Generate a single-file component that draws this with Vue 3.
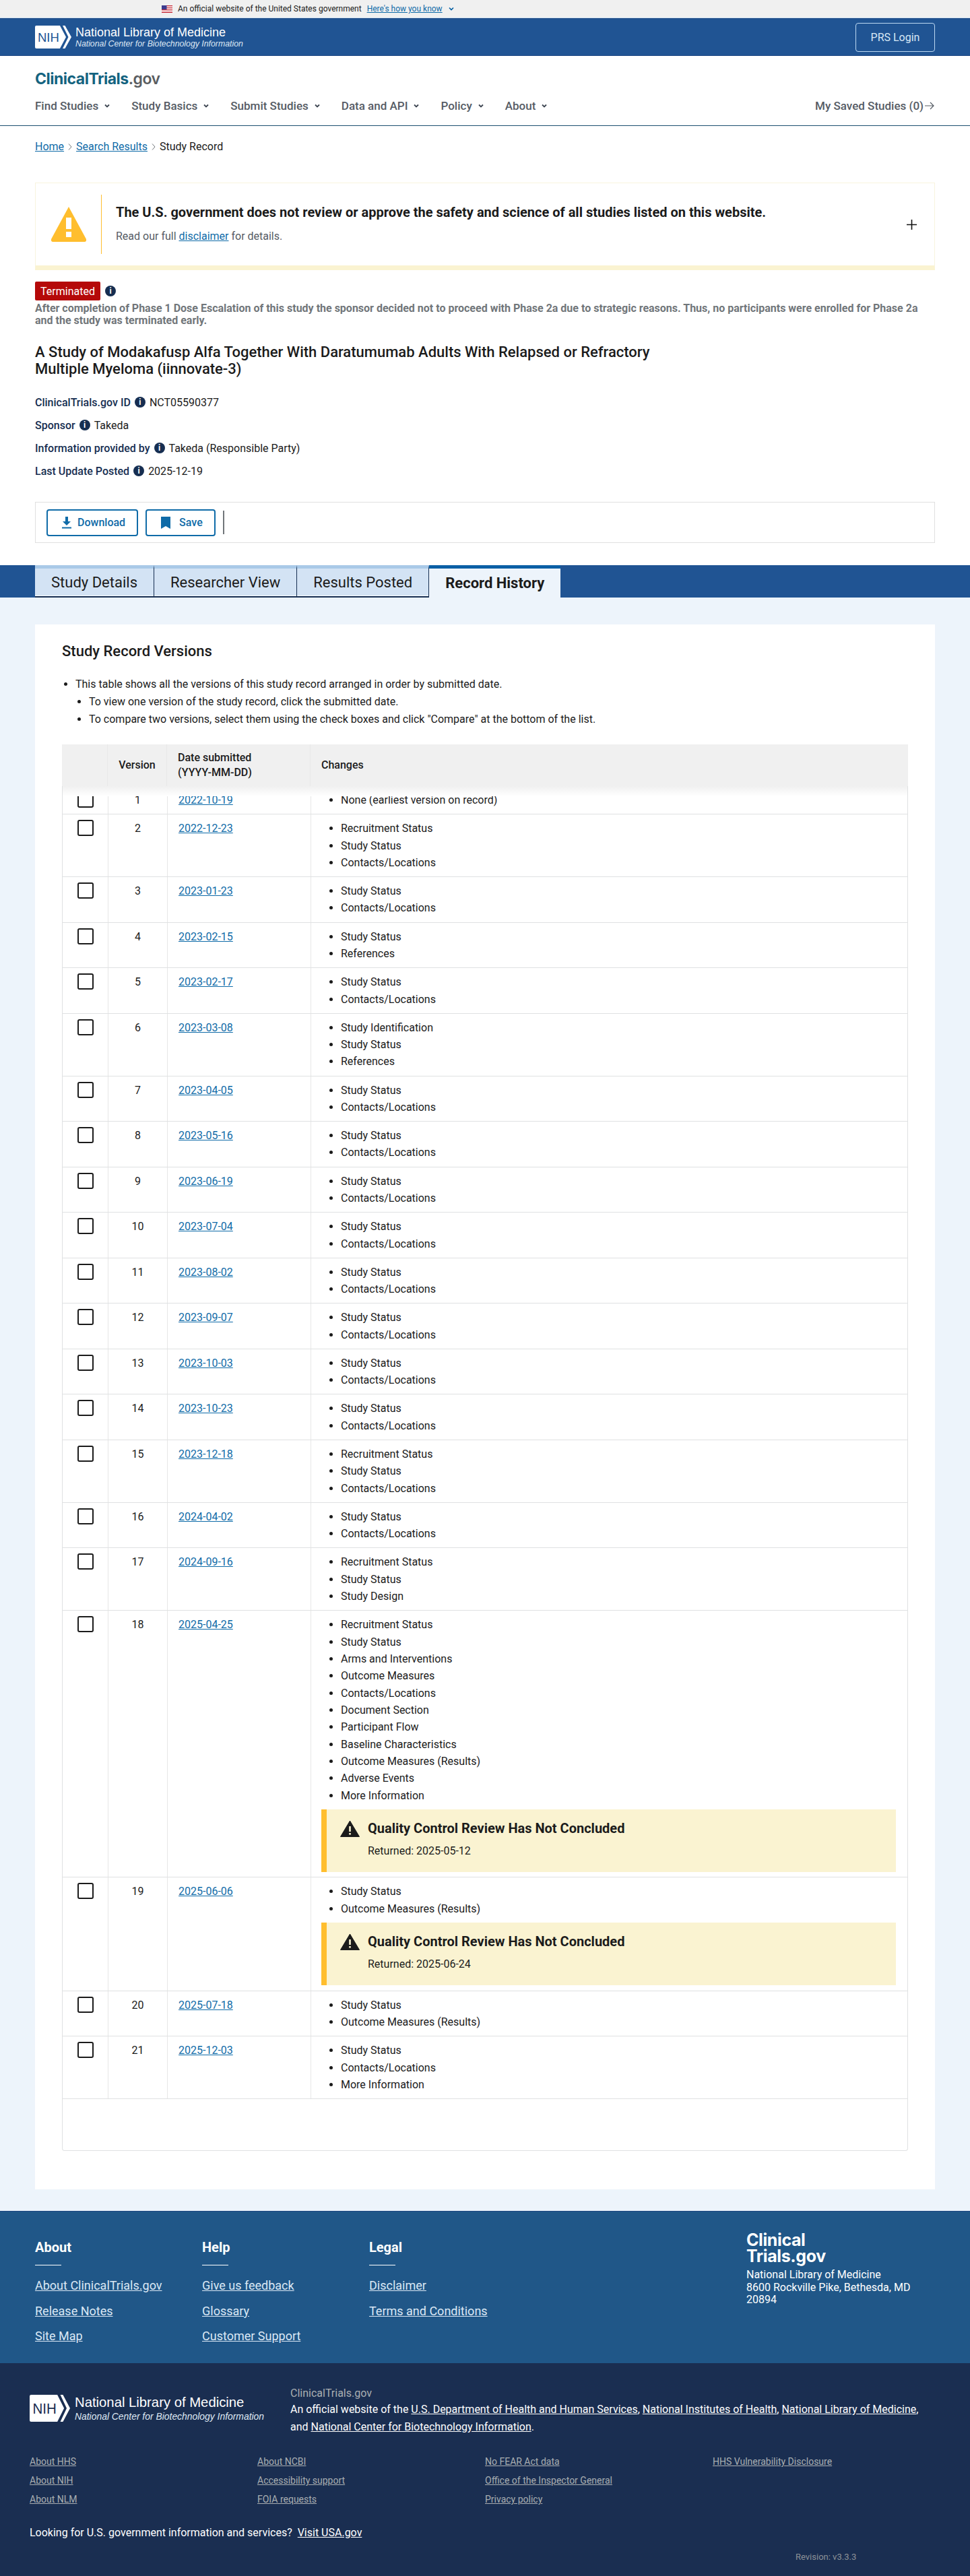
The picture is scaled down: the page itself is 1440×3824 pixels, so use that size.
<script setup>
const CL = ['Study Status', 'Contacts/Locations']

const versions = [
  { n: 1, date: '2022-10-19', changes: ['None (earliest version on record)'] },
  { n: 2, date: '2022-12-23', changes: ['Recruitment Status', ...CL] },
  { n: 3, date: '2023-01-23', changes: CL },
  { n: 4, date: '2023-02-15', changes: ['Study Status', 'References'] },
  { n: 5, date: '2023-02-17', changes: CL },
  { n: 6, date: '2023-03-08', changes: ['Study Identification', 'Study Status', 'References'] },
  { n: 7, date: '2023-04-05', changes: CL },
  { n: 8, date: '2023-05-16', changes: CL },
  { n: 9, date: '2023-06-19', changes: CL },
  { n: 10, date: '2023-07-04', changes: CL },
  { n: 11, date: '2023-08-02', changes: CL },
  { n: 12, date: '2023-09-07', changes: CL },
  { n: 13, date: '2023-10-03', changes: CL },
  { n: 14, date: '2023-10-23', changes: CL },
  { n: 15, date: '2023-12-18', changes: ['Recruitment Status', ...CL] },
  { n: 16, date: '2024-04-02', changes: CL },
  { n: 17, date: '2024-09-16', changes: ['Recruitment Status', 'Study Status', 'Study Design'] },
  {
    n: 18,
    date: '2025-04-25',
    changes: ['Recruitment Status', 'Study Status', 'Arms and Interventions', 'Outcome Measures', 'Contacts/Locations', 'Document Section', 'Participant Flow', 'Baseline Characteristics', 'Outcome Measures (Results)', 'Adverse Events', 'More Information'],
    returned: '2025-05-12'
  },
  { n: 19, date: '2025-06-06', changes: ['Study Status', 'Outcome Measures (Results)'], returned: '2025-06-24' },
  { n: 20, date: '2025-07-18', changes: ['Study Status', 'Outcome Measures (Results)'] },
  { n: 21, date: '2025-12-03', changes: [...CL, 'More Information'] }
]

const navItems = ['Find Studies', 'Study Basics', 'Submit Studies', 'Data and API', 'Policy', 'About']
const tabs = ['Study Details', 'Researcher View', 'Results Posted', 'Record History']

const meta = [
  { label: 'ClinicalTrials.gov ID', value: 'NCT05590377' },
  { label: 'Sponsor', value: 'Takeda' },
  { label: 'Information provided by', value: 'Takeda (Responsible Party)' },
  { label: 'Last Update Posted', value: '2025-12-19' }
]

const footerCols = [
  { title: 'About', links: ['About ClinicalTrials.gov', 'Release Notes', 'Site Map'] },
  { title: 'Help', links: ['Give us feedback', 'Glossary', 'Customer Support'] },
  { title: 'Legal', links: ['Disclaimer', 'Terms and Conditions'] }
]

const legalCols = [
  ['About HHS', 'About NIH', 'About NLM'],
  ['About NCBI', 'Accessibility support', 'FOIA requests'],
  ['No FEAR Act data', 'Office of the Inspector General', 'Privacy policy'],
  ['HHS Vulnerability Disclosure']
]
</script>

<template>
  <div class="page">
    <div class="gov-banner">
      <svg class="flag" width="16" height="11" viewBox="0 0 16 11">
        <rect width="16" height="11" fill="#fff" />
        <rect y="0" width="16" height="1.4" fill="#c8313e" />
        <rect y="3" width="16" height="1.4" fill="#c8313e" />
        <rect y="6" width="16" height="1.4" fill="#c8313e" />
        <rect y="9.4" width="16" height="1.6" fill="#c8313e" />
        <rect width="7.5" height="6" fill="#3c3b8f" />
      </svg>
      <span>An official website of the United States government</span>
      <a class="how">Here's how you know</a>
      <svg width="10" height="10" viewBox="0 0 10 10" fill="none" stroke="#005ea2" stroke-width="1.6"><path d="M2 3.5 5 6.5 8 3.5" /></svg>
    </div>

    <header class="nih-bar">
      <div class="nih-logo">
        <svg width="54" height="34" viewBox="0 0 54 34">
          <path d="M2 0H37L46 17 37 34H2a2 2 0 0 1-2-2V2a2 2 0 0 1 2-2Z" fill="#fff" />
          <path d="M41 0h3.500L54 17 44.500 34H41L49.500 17Z" fill="#fff" />
          <text x="4" y="24" font-family="Liberation Sans, sans-serif" font-size="18.500" fill="#205493">NIH</text>
        </svg>
        <div class="nih-text">
          <div class="nih-name">National Library of Medicine</div>
          <div class="nih-sub">National Center for Biotechnology Information</div>
        </div>
      </div>
      <a class="prs">PRS Login</a>
    </header>

    <div class="site-head">
      <div class="brand"><span class="brand-a">ClinicalTrials</span><span class="brand-b">.gov</span></div>
      <nav class="nav">
        <div class="nav-left">
          <a v-for="item in navItems" :key="item" class="nav-item">
            {{ item }}
            <svg width="10" height="10" viewBox="0 0 10 10" fill="none" stroke="#3d4551" stroke-width="1.8"><path d="M2 3.500 5 6.500 8 3.500" /></svg>
          </a>
        </div>
        <a class="saved">My Saved Studies (0)
          <svg width="16" height="14" viewBox="0 0 16 14" fill="none" stroke="#565c65" stroke-width="1.2"><path d="M1 7h13M9 2l5 5-5 5" /></svg>
        </a>
      </nav>
    </div>

    <div class="top">
      <div class="crumbs">
        <a>Home</a>
        <svg width="6" height="12" viewBox="0 0 6 12" fill="none" stroke="#71767a" stroke-width="1"><path d="M1 1.500 5 6 1 10.500" /></svg>
        <a>Search Results</a>
        <svg width="6" height="12" viewBox="0 0 6 12" fill="none" stroke="#71767a" stroke-width="1"><path d="M1 1.500 5 6 1 10.500" /></svg>
        <span>Study Record</span>
      </div>

      <section class="notice">
        <div class="notice-icon">
          <svg width="52" height="52" viewBox="0 0 52 52">
            <path d="M26 0 52 48a3 3 0 0 1-2 4H2a3 3 0 0 1-2-4Z" fill="#ffbe2e" />
            <rect x="22" y="16" width="8" height="17" fill="#fff" />
            <rect x="22" y="37" width="8" height="8" fill="#fff" />
          </svg>
        </div>
        <div class="notice-body">
          <div class="notice-title">The U.S. government does not review or approve the safety and science of all studies listed on this website.</div>
          <div class="notice-sub">Read our full <a>disclaimer</a> for details.</div>
        </div>
        <svg class="plus" width="15" height="15" viewBox="0 0 15 15" stroke="#111" stroke-width="1.6"><path d="M7.500 0v15M0 7.500h15" /></svg>
      </section>

      <div class="status-row">
        <span class="status">Terminated</span>
        <span class="info">i</span>
      </div>
      <p class="reason">After completion of Phase 1 Dose Escalation of this study the sponsor decided not to proceed with Phase 2a due to strategic reasons. Thus, no participants were enrolled for Phase 2a and the study was terminated early.</p>
      <h1 class="title">A Study of Modakafusp Alfa Together With Daratumumab Adults With Relapsed or Refractory Multiple Myeloma (iinnovate-3)</h1>

      <div class="meta">
        <div v-for="m in meta" :key="m.label" class="meta-row">
          <span class="meta-label">{{ m.label }}</span>
          <span class="info">i</span>
          <span>{{ m.value }}</span>
        </div>
      </div>

      <div class="toolbar">
        <a class="tool-btn">
          <svg width="14" height="18" viewBox="0 0 14 18" fill="#0f6ba8"><path d="M5 0h4v7h4L7 13 1 7h4ZM0 15.500h14v2H0Z" /></svg>
          Download
        </a>
        <a class="tool-btn">
          <svg class="save-icon" width="14" height="18" viewBox="0 0 14 18" fill="#0f6ba8"><path d="M0 0h14v18l-7-4-7 4Z" /></svg>
          Save
        </a>
        <span class="tool-sep"></span>
      </div>
    </div>

    <div class="tabs">
      <a v-for="t in tabs" :key="t" class="tab" :class="{ active: t === 'Record History' }">{{ t }}</a>
    </div>

    <main class="main">
      <section class="card">
        <h2 class="card-title">Study Record Versions</h2>
        <ul class="intro">
          <li>This table shows all the versions of this study record arranged in order by submitted date.
            <ul>
              <li>To view one version of the study record, click the submitted date.</li>
              <li>To compare two versions, select them using the check boxes and click "Compare" at the bottom of the list.</li>
            </ul>
          </li>
        </ul>

        <div class="vtable">
          <div class="vhead">
            <div></div>
            <div class="c-ver">Version</div>
            <div class="c-date"><span>Date submitted<br />(YYYY-MM-DD)</span></div>
            <div class="c-chg">Changes</div>
          </div>
          <div class="fade"></div>
          <div v-for="v in versions" :key="v.n" class="vrow">
            <div class="cell cell-box"><span class="box"></span></div>
            <div class="cell cell-num">{{ v.n }}</div>
            <div class="cell cell-date"><a>{{ v.date }}</a></div>
            <div class="cell cell-chg">
              <ul>
                <li v-for="(c, i) in v.changes" :key="i">{{ c }}</li>
              </ul>
              <div v-if="v.returned" class="qc">
                <div class="qc-head">
                  <svg width="29" height="25" viewBox="0 0 29 25">
                    <path d="M14.500 1 28.500 24.500H.5Z" fill="#1b1b1b" stroke="#1b1b1b" stroke-linejoin="round" />
                    <rect x="13.200" y="9" width="2.600" height="8" fill="#faf3d1" />
                    <rect x="13.200" y="19" width="2.600" height="2.600" fill="#faf3d1" />
                  </svg>
                  <span>Quality Control Review Has Not Concluded</span>
                </div>
                <div class="qc-sub">Returned: {{ v.returned }}</div>
              </div>
            </div>
          </div>
        </div>
      </section>
    </main>

    <footer>
      <div class="foot-blue">
        <div class="foot-cols">
          <div v-for="col in footerCols" :key="col.title" class="foot-col">
            <div class="foot-title">{{ col.title }}</div>
            <a v-for="l in col.links" :key="l">{{ l }}</a>
          </div>
        </div>
        <div class="foot-addr">
          <div class="foot-brand">Clinical<br />Trials.gov</div>
          <div>National Library of Medicine<br />8600 Rockville Pike, Bethesda, MD<br />20894</div>
        </div>
      </div>
      <div class="foot-dark">
        <div class="dark-top">
          <div class="nih-logo dark-logo">
            <svg width="60" height="40" viewBox="0 0 54 34" preserveAspectRatio="none">
              <path d="M2 0H37L46 17 37 34H2a2 2 0 0 1-2-2V2a2 2 0 0 1 2-2Z" fill="#fff" />
              <path d="M41 0h3.500L54 17 44.500 34H41L49.500 17Z" fill="#fff" />
              <text x="4" y="24" font-family="Liberation Sans, sans-serif" font-size="18.500" fill="#1a2e51">NIH</text>
            </svg>
            <div class="nih-text">
              <div class="nih-name">National Library of Medicine</div>
              <div class="nih-sub">National Center for Biotechnology Information</div>
            </div>
          </div>
          <div class="official">
            <div class="official-name">ClinicalTrials.gov</div>
            <div>An official website of the <a>U.S. Department of Health and Human Services</a>, <a>National Institutes of Health</a>, <a>National Library of Medicine</a>,<br />and <a>National Center for Biotechnology Information</a>.</div>
          </div>
        </div>
        <div class="legal">
          <div v-for="(col, i) in legalCols" :key="i" class="legal-col">
            <a v-for="l in col" :key="l">{{ l }}</a>
          </div>
        </div>
        <div class="usa">Looking for U.S. government information and services? &nbsp;<a>Visit USA.gov</a></div>
        <div class="revision">Revision: v3.3.3</div>
      </div>
    </footer>
  </div>
</template>

<style>
html, body { margin: 0; padding: 0; background: #fff; }
</style>

<style scoped>
.page { font-family: Roboto, "Liberation Sans", sans-serif; font-size: 16px; color: #1b1b1b; width: 1440px; }
a { color: #0f6ba8; text-decoration: underline; }
ul { margin: 0; padding: 0; }

.gov-banner {
  height: 26px; background: #f0f0f0; border-bottom: 1px solid #cfe3f5;
  display: flex; align-items: center; padding-left: 240px; gap: 8px;
  font-size: 12px; color: #1b1b1b;
}

.nih-bar {
  height: 54px; background: #205493; border-top: 1px solid #1a4480; border-bottom: 1px solid #1a4480;
  display: flex; justify-content: space-between; align-items: center; padding: 0 52px;
}
.nih-logo { display: flex; align-items: center; gap: 6px; color: #fff; font-family: "Liberation Sans", sans-serif; }
.nih-name { font-size: 18px; line-height: 20px; }
.nih-sub { font-size: 12.300px; line-height: 15px; font-style: italic; color: #dfe8f3; }
.prs {
  width: 118px; height: 43px; box-sizing: border-box; border: 1px solid #bcd8f2; border-radius: 4px;
  display: flex; align-items: center; justify-content: center; color: #d9e8f6; text-decoration: none;
}

.site-head { padding: 19px 52px 0; height: 104px; box-sizing: border-box; border-bottom: 1px solid #1a4e6e; }
.brand { font-family: Inter, sans-serif; font-size: 23px; font-weight: 700; line-height: 30px; letter-spacing: -0.5px; }
.brand-a { color: #14637f; }
.brand-b { color: #5a5d61; font-weight: 600; }
.nav { display: flex; justify-content: space-between; align-items: center; margin-top: 15px; font-size: 17px; line-height: 20px; }
.nav-left { display: flex; gap: 31px; }
.nav-item { display: flex; align-items: center; gap: 8px; color: #565c65; font-weight: 500; text-decoration: none; }
.saved { display: flex; align-items: center; color: #565c65; font-weight: 500; text-decoration: none; gap: 1px; }

.top { padding: 19px 52px 0; }
.crumbs { display: flex; align-items: center; gap: 6px; line-height: 24px; }

.notice {
  margin-top: 41px; height: 130px; box-sizing: border-box; display: flex; align-items: center;
  border: 1px solid #f8f4de; border-bottom: 7px solid #faf3d1; position: relative;
}
.notice-icon { width: 97px; height: 88px; border-right: 1px solid #ffbe2e; display: flex; align-items: center; justify-content: center; flex: none; }
.notice-body { padding-left: 21px; }
.notice-title { font-size: 20px; font-weight: 700; line-height: 24px; }
.notice-sub { margin-top: 12px; color: #565c65; line-height: 24px; }
.plus { position: absolute; right: 26px; top: 54px; }

.status-row { display: flex; align-items: center; gap: 7px; margin-top: 17px; }
.status {
  width: 97px; height: 28px; box-sizing: border-box; background: #b50909; border-radius: 2px;
  color: #fff; display: flex; align-items: center; justify-content: center;
}
.info {
  width: 16px; height: 16px; border-radius: 50%; background: #162e51; color: #fff;
  display: inline-flex; align-items: center; justify-content: center; font-size: 12px; font-weight: 700; flex: none;
}
.reason { margin: 3px 0 0; width: 1336px; font-size: 16px; font-weight: 700; line-height: 18px; color: #71767a; }
.title { margin: 25px 0 0; width: 960px; font-size: 22px; font-weight: 500; line-height: 25px; color: #1b1b1b; }
.meta { margin-top: 20px; }
.meta-row { height: 34px; display: flex; align-items: center; gap: 6px; }
.meta-label { color: #162e51; font-weight: 500; }

.toolbar {
  margin-top: 29px; height: 61px; box-sizing: border-box; border: 1px solid #e0e0e0; display: flex; align-items: center; padding-left: 16px; gap: 11px;
}
.tool-btn {
  height: 40px; box-sizing: border-box; border: 2px solid #0f6ba8; border-radius: 4px; padding: 0 17px 0 21px;
  display: flex; align-items: center; gap: 9px; font-weight: 500; text-decoration: none;
}
.save-icon { margin-right: 4px; }
.tool-sep { width: 2px; height: 35px; background: #71767a; margin-left: 0; }

.tabs { margin-top: 33px; height: 48px; background: #205493; padding-left: 52px; display: flex; }
.tab {
  box-sizing: border-box; height: 48px; padding: 0 24px; background: #d3e3f4; border-top: 5px solid #a9c9e8;
  border-right: 1px solid #162e51; border-bottom: 2px solid #162e51; box-shadow: inset 0 -1px #fff; font-size: 22px; color: #1b1b1b;
  text-decoration: none; display: flex; align-items: center;
}
.tab.active { background: #edf4fb; border-top-color: #0b5fa5; border-right: none; border-bottom: none; box-shadow: none; font-weight: 700; }

.main { background: #edf4fb; padding: 40px 52px 32px; }
.card { background: #fff; padding: 24px 40px 57px; }
.card-title { margin: 0; font-size: 22px; font-weight: 500; line-height: 32px; }
.intro { margin-top: 20px; padding-left: 20px; line-height: 26px; }
.intro ul { padding-left: 20px; list-style: disc; }
.vtable { margin-top: 24px; border: 1px solid #dfe1e2; border-top: none; border-radius: 0 0 4px 4px; padding-bottom: 76px; position: relative; }
.vhead {
  display: grid; grid-template-columns: 68px 88px 213px 1fr; height: 62px; background: #f0f0f0;
  margin: 0 -1px; font-weight: 500; line-height: 22px;
}
.vhead > div { display: flex; align-items: center; border-right: 1px solid #e8e8e8; }
.vhead > div:last-child { border-right: none; }
.vhead .c-ver { justify-content: center; }
.vhead .c-date { padding-left: 16px; }
.vhead .c-chg { padding-left: 16px; }
.fade { position: absolute; left: 0; right: 0; top: 62px; height: 15px; background: linear-gradient(#f0f0f0, #fff); z-index: 1; }
.vrow { display: grid; grid-template-columns: 68px 88px 213px 1fr; border-bottom: 1px solid #dfe1e2; }
.cell { padding-top: 8px; border-right: 1px solid #e6e6e6; box-sizing: border-box; }
.cell:last-child { border-right: none; }
.cell-box { padding-left: 22px; }
.box { display: block; width: 24px; height: 24px; box-sizing: border-box; border: 2px solid #1b1b1b; border-radius: 3px; }
.cell-num { text-align: center; line-height: 25.330px; }
.cell-date { padding-left: 16px; line-height: 25.330px; }
.cell-chg { padding: 8px 17px 7.900px 15px; }
.cell-chg ul { padding-left: 29px; line-height: 25.330px; }
.qc { margin-top: 8.200px; height: 92.500px; box-sizing: border-box; background: #faf3d1; border-left: 8px solid #ffbe2e; padding: 15px 0 0 20px; }
.qc-head { display: flex; align-items: center; gap: 12px; font-size: 20px; font-weight: 700; line-height: 26px; }
.qc-sub { margin: 8px 0 0 41px; line-height: 26px; }

.foot-blue {
  height: 226px; box-sizing: border-box; background: #205788; border-top: 1px solid #1a4480;
  display: flex; justify-content: space-between; padding: 0 52px; color: #fff;
}
.foot-cols { display: flex; padding-top: 40px; }
.foot-col { width: 248px; display: flex; flex-direction: column; align-items: flex-start; }
.foot-col a { color: #dbe8f5; line-height: 24px; margin-bottom: 13.500px; font-size: 18px; }
.foot-title { font-size: 20px; font-weight: 700; line-height: 26px; position: relative; padding-bottom: 29px; margin-bottom: 3px; }
.foot-title::after { content: ''; position: absolute; left: 0; bottom: 15px; width: 39px; height: 1px; background: #fff; }
.foot-addr { width: 280px; padding-top: 30px; line-height: 18.500px; }
.foot-brand { font-family: Inter, sans-serif; font-weight: 700; font-size: 25px; line-height: 24px; margin-bottom: 7px; letter-spacing: -0.4px; }

.foot-dark { height: 316px; box-sizing: border-box; background: #1a2e51; padding: 34px 44px 0; color: #fff; position: relative; }
.dark-top { display: flex; }
.dark-logo { width: 387px; height: 50px; align-self: flex-start; margin-top: 8px; gap: 7px; }
.dark-logo .nih-name { font-size: 20.300px; line-height: 24px; }
.dark-logo .nih-sub { font-size: 13.900px; line-height: 18px; }
.official { line-height: 26px; }
.official a { color: #fff; }
.official-name { color: #a9aeb1; line-height: 22px; }
.legal { display: flex; margin-top: 28px; }
.legal-col { width: 342px; display: flex; flex-direction: column; align-items: flex-start; gap: 8px; font-size: 14px; line-height: 20px; }
.legal-col a { color: #a9aeb1; }
.usa { position: absolute; left: 44px; top: 240px; line-height: 24px; }
.usa a { color: #fff; }
.revision { position: absolute; left: 1181px; top: 280px; font-size: 13px; color: #8d9297; }
</style>
